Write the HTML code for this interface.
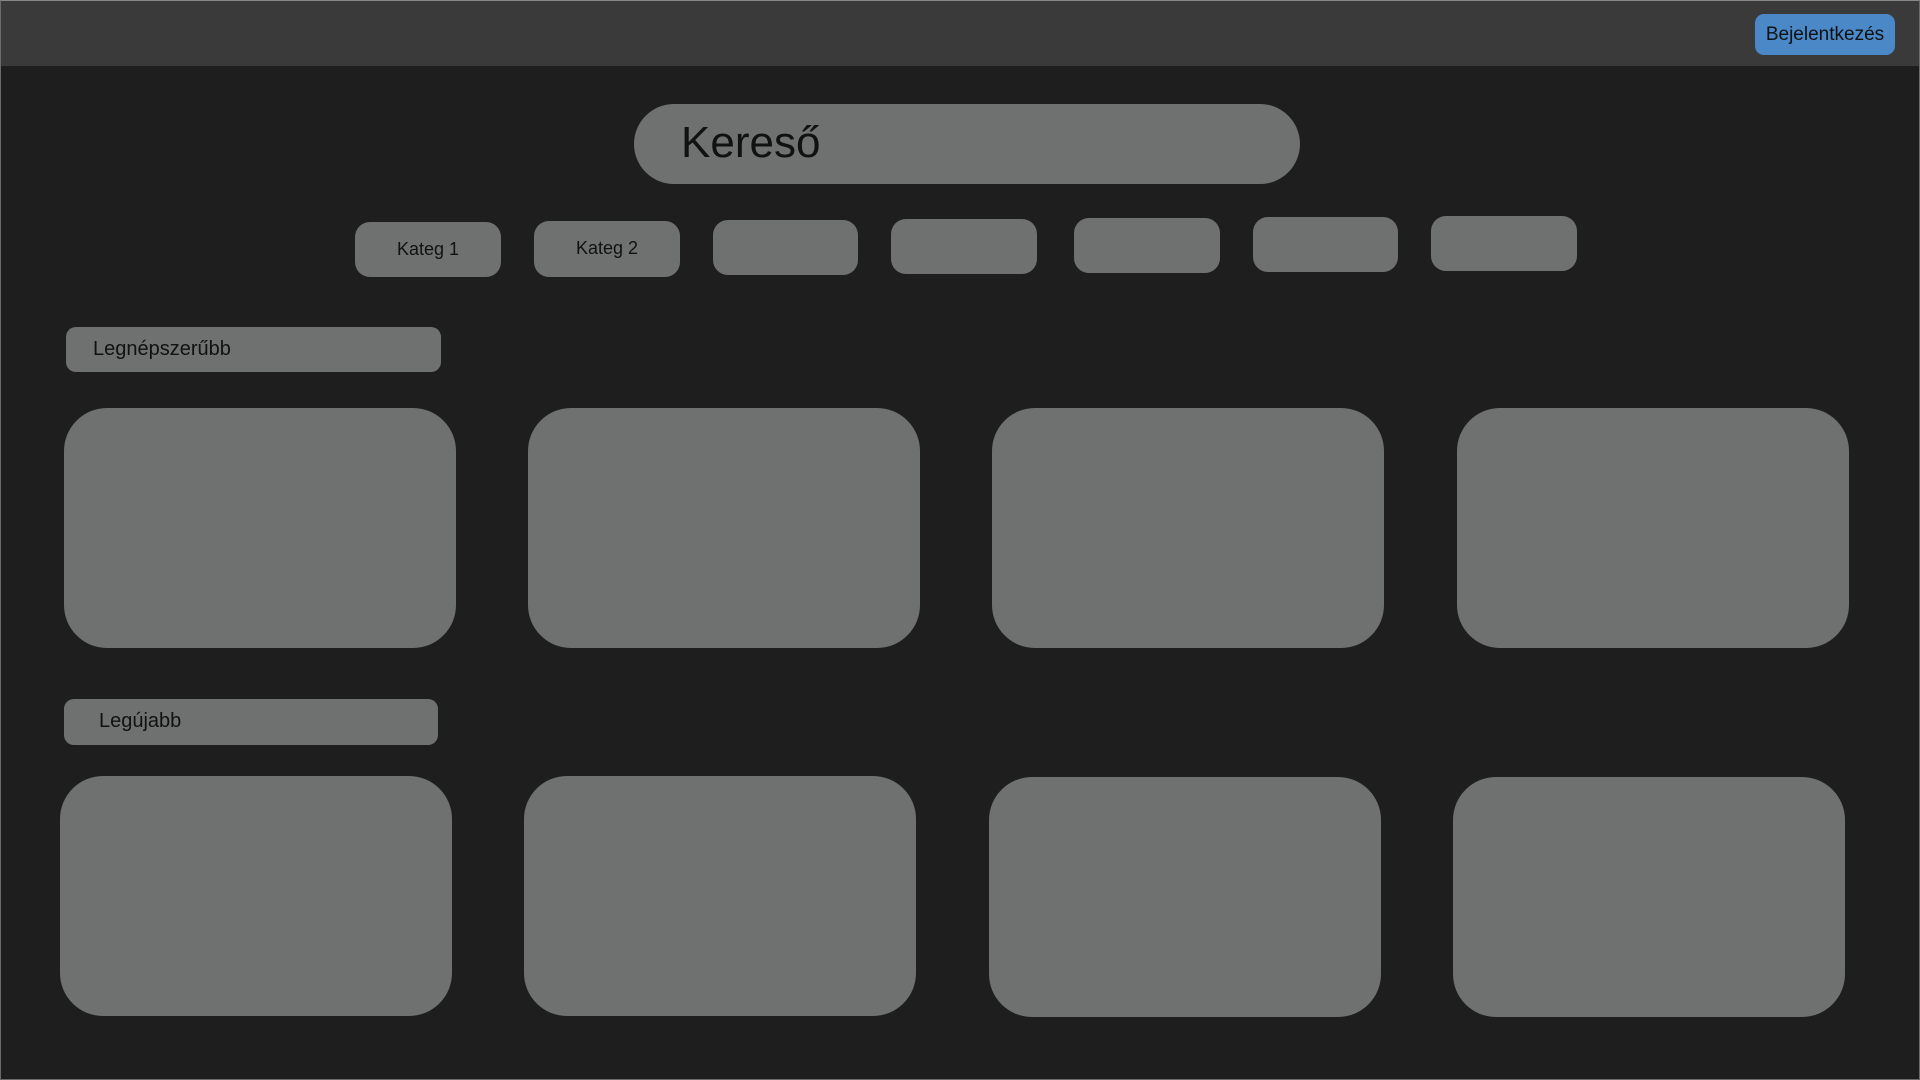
<!DOCTYPE html>
<html><head><meta charset="utf-8"><style>
html,body{margin:0;padding:0}
body{width:1920px;height:1080px;background:#1e1e1e;position:relative;overflow:hidden;font-family:"Liberation Sans",sans-serif;}
.frame{position:absolute;left:0;top:0;width:1918px;height:1078px;border:1px solid #6a6a6a;border-top-color:#888;}
.hdr{position:absolute;left:1px;top:1px;width:1918px;height:65px;background:#3a3a3a;}
.btn{position:absolute;left:1755px;top:14px;width:140px;height:41px;background:#4a88c8;border-radius:9px;color:#111;font-size:19px;line-height:41px;text-align:center;}
.g{position:absolute;background:#6f7170;}
.chip{border-radius:15px;color:#111;font-size:18px;text-align:center;}
.card{border-radius:43px;width:392px;height:240px;}
.lab{border-radius:10px;color:#111;font-size:20px;line-height:44px;}
</style></head><body>
<div class="frame"></div>
<div class="hdr"></div>
<div class="btn">Bejelentkezés</div>
<div class="g" style="left:634px;top:104px;width:666px;height:80px;border-radius:40px;"><span style="position:absolute;left:47px;top:14px;font-size:44px;color:#111;">Kereső</span></div>
<div class="g chip" style="left:355px;top:222px;width:146px;height:55px;line-height:55px;">Kateg 1</div>
<div class="g chip" style="left:534px;top:221px;width:146px;height:56px;line-height:54px;">Kateg 2</div>
<div class="g chip" style="left:713px;top:220px;width:145px;height:55px;"></div>
<div class="g chip" style="left:891px;top:219px;width:146px;height:55px;"></div>
<div class="g chip" style="left:1074px;top:218px;width:146px;height:55px;"></div>
<div class="g chip" style="left:1253px;top:217px;width:145px;height:55px;"></div>
<div class="g chip" style="left:1431px;top:216px;width:146px;height:55px;"></div>
<div class="g lab" style="left:66px;top:327px;width:375px;height:45px;"><span style="margin-left:27px">Legnépszerűbb</span></div>
<div class="g card" style="left:64px;top:408px;"></div>
<div class="g card" style="left:528px;top:408px;"></div>
<div class="g card" style="left:992px;top:408px;"></div>
<div class="g card" style="left:1457px;top:408px;"></div>
<div class="g lab" style="left:64px;top:699px;width:374px;height:46px;"><span style="margin-left:35px">Legújabb</span></div>
<div class="g card" style="left:60px;top:776px;"></div>
<div class="g card" style="left:524px;top:776px;"></div>
<div class="g card" style="left:989px;top:777px;"></div>
<div class="g card" style="left:1453px;top:777px;"></div>
</body></html>
